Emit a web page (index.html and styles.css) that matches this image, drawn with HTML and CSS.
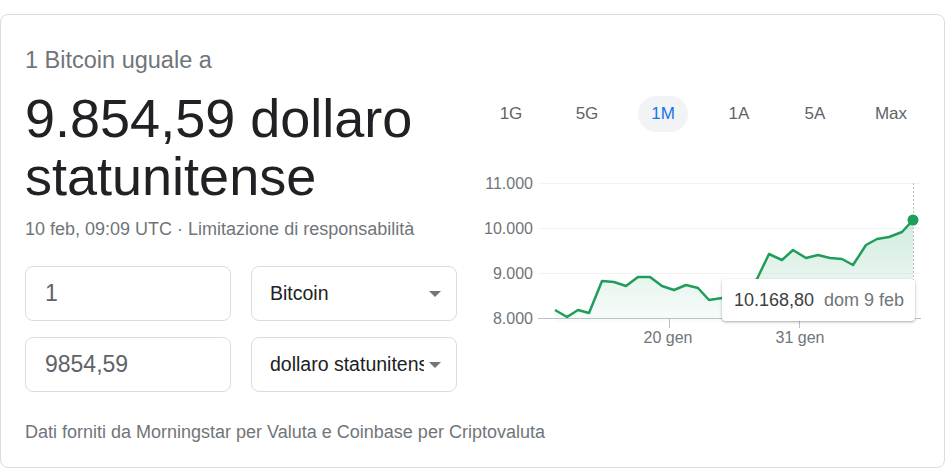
FILE: index.html
```html
<!DOCTYPE html>
<html lang="it">
<head>
  <meta charset="UTF-8">
  <meta name="viewport" content="width=device-width, initial-scale=1.0">
  <title>Convertitore Bitcoin</title>
  <link rel="stylesheet" href="styles.css">
</head>
<body>
  <div class="card">
    <div class="left">
      <div class="label">1 Bitcoin uguale a</div>
      <div class="result">9.854,59 dollaro<br>statunitense</div>
      <div class="meta">10 feb, 09:09 UTC · Limitazione di responsabilità</div>

      <div class="converter">
        <input class="amount" type="text" value="1">
        <div class="select"><span>Bitcoin</span></div>
        <input class="amount" type="text" value="9854,59">
        <div class="select"><span>dollaro statunitense</span></div>
      </div>

      <div class="source">Dati forniti da Morningstar per Valuta e Coinbase per Criptovaluta</div>
    </div>

    <div class="right">
      <div class="tabs">
        <div class="tab">1G</div>
        <div class="tab">5G</div>
        <div class="tab active">1M</div>
        <div class="tab">1A</div>
        <div class="tab">5A</div>
        <div class="tab">Max</div>
      </div>

      <div class="chart">
        <svg width="460" height="180" viewBox="0 0 460 180">
          <defs>
            <linearGradient id="fill" x1="0" y1="0" x2="0" y2="1">
              <stop offset="0" stop-color="#1e9e5a" stop-opacity="0.2"/>
              <stop offset="1" stop-color="#1e9e5a" stop-opacity="0.03"/>
            </linearGradient>
          </defs>
          <!-- griglia -->
          <g stroke="#f1f3f4" stroke-width="1">
            <line x1="68" y1="13.5" x2="451" y2="13.5"/>
            <line x1="68" y1="58.5" x2="451" y2="58.5"/>
            <line x1="68" y1="103.5" x2="451" y2="103.5"/>
          </g>
          <g class="axis-y" text-anchor="end">
            <text x="63" y="19">11.000</text>
            <text x="63" y="64">10.000</text>
            <text x="63" y="109">9.000</text>
            <text x="63" y="154">8.000</text>
          </g>
          <path d="M85 140 L97 147 L108 140 L119 143 L132 111 L144 112 L156 116 L168 107 L180 107 L192 116 L204 120 L216 115 L228 118 L239 130 L252 128 L264 126 L276 119 L287 109 L299 84 L312 90 L323 80 L336 88 L348 85 L360 88 L372 89 L383 95 L396 75 L407 69 L419 67 L432 62 L443 50 L443 152 L85 152 Z" fill="url(#fill)"/>
          <line x1="443.5" y1="13" x2="443.5" y2="148" stroke="#bdc1c6" stroke-dasharray="2 2"/>
          <line x1="68" y1="148.5" x2="451" y2="148.5" stroke="#bdc1c6"/>
          <line x1="199.5" y1="148" x2="199.5" y2="158" stroke="#bdc1c6"/>
          <line x1="329.5" y1="148" x2="329.5" y2="158" stroke="#bdc1c6"/>
          <path d="M85 140 L97 147 L108 140 L119 143 L132 111 L144 112 L156 116 L168 107 L180 107 L192 116 L204 120 L216 115 L228 118 L239 130 L252 128 L264 126 L276 119 L287 109 L299 84 L312 90 L323 80 L336 88 L348 85 L360 88 L372 89 L383 95 L396 75 L407 69 L419 67 L432 62 L443 50" fill="none" stroke="#1e9e5a" stroke-width="2.5" stroke-linejoin="round"/>
          <circle cx="443" cy="50" r="5.5" fill="#1e9e5a"/>
          <g class="axis-x" text-anchor="middle">
            <text x="198" y="173">20 gen</text>
            <text x="330" y="173">31 gen</text>
          </g>
        </svg>
        <div class="tooltip"><span class="price">10.168,80</span><span class="date">dom 9 feb</span></div>
      </div>
    </div>
  </div>
</body>
</html>
```

FILE: styles.css
```css
/* pagina */
body {
  margin: 0;
  font-family: "Liberation Sans", Arial, sans-serif;
  background-color: #fff;
}

.card {
  display: flex;
  box-sizing: border-box;
  width: 945px;
  height: 454px;
  margin-top: 14px;
  padding-top: 31px;
  border: 1px solid #dadce0;
  border-radius: 8px;
}

/* colonna sinistra */
.left {
  width: 445px;
  padding-left: 24px;
}

.label {
  font-size: 23.5px;
  line-height: 28px;
  color: #70757a;
}

.result {
  margin-top: 15px;
  font-size: 54px;
  line-height: 58px;
  color: #202124;
}

.meta {
  margin-top: 14px;
  font-size: 18px;
  line-height: 20px;
  color: #70757a;
  white-space: nowrap;
}

.converter {
  display: grid;
  grid-template-columns: 206px 206px;
  gap: 16px 20px;
  margin-top: 27px;
}

.amount,
.select {
  box-sizing: border-box;
  height: 55px;
  border: 1px solid #dadce0;
  border-radius: 8px;
  background: #fff;
}

.amount {
  padding: 0 0 0 19px;
  font-family: inherit;
  font-size: 23px;
  color: #5f6368;
  outline: none;
}

.select {
  position: relative;
  display: flex;
  align-items: center;
  padding: 0 32px 0 18px;
  font-size: 19.5px;
  color: #202124;
}

.select span {
  white-space: nowrap;
  overflow: hidden;
}

/* freccia del menu */
.select::after {
  content: "";
  position: absolute;
  right: 15px;
  top: 24px;
  border-left: 6px solid transparent;
  border-right: 6px solid transparent;
  border-top: 6px solid #757575;
}

.source {
  margin-top: 30px;
  font-size: 18px;
  line-height: 20px;
  color: #70757a;
  white-space: nowrap;
}

/* colonna destra */
.right {
  flex: 1;
}

.tabs {
  display: flex;
  gap: 26px;
  margin-top: 50px;
  padding-left: 16px;
}

.tab {
  width: 50px;
  height: 36px;
  line-height: 36px;
  border-radius: 18px;
  text-align: center;
  font-size: 17px;
  color: #5f6368;
}

.tab.active {
  background-color: #f1f3f4;
  color: #1a73e8;
}

.chart {
  position: relative;
  margin-top: 38px;
  width: 460px;
  height: 180px;
}

.chart svg {
  display: block;
}

.axis-y text,
.axis-x text {
  font-family: "Liberation Sans", Arial, sans-serif;
  font-size: 16px;
  fill: #70757a;
}

.tooltip {
  position: absolute;
  left: 252px;
  top: 109px;
  box-sizing: border-box;
  width: 193px;
  height: 42px;
  padding-left: 12px;
  display: flex;
  align-items: center;
  gap: 10px;
  background: #fff;
  border-radius: 4px;
  box-shadow: 0 1px 3px rgba(60, 64, 67, 0.3), 0 1px 2px rgba(60, 64, 67, 0.15);
  font-size: 18px;
  white-space: nowrap;
}

.tooltip .price {
  color: #3c4043;
}

.tooltip .date {
  color: #70757a;
}
```
